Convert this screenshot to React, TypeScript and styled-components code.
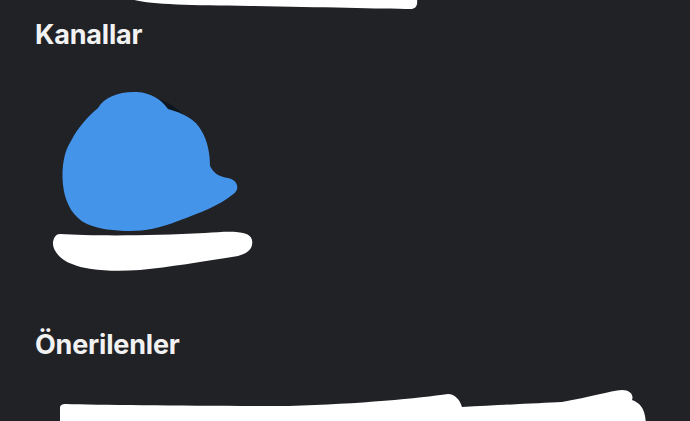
import { createGlobalStyle, styled } from 'styled-components';

const GlobalStyle = createGlobalStyle`
  html, body {
    margin: 0;
    padding: 0;
    background: #212226;
  }
  body {
    font-family: Inter, 'Noto Sans', sans-serif;
    color: #f4f4f5;
    overflow: hidden;
  }
`;

type Channel = {
  id: string;
};

const channels: Channel[] = [{ id: 'c1' }];

export default function App(): JSX.Element {
  return (
    <Page>
      <GlobalStyle />
      <TopBar>
        <TitleMark width={300} height={12} viewBox={'118 0 300 12'}>
          <path
            d={'M 122 -6 C 130 4 170 5 250 6 C 320 7 380 9 412 9 C 418 8 418 2 416 -6 Z'}
            fill={'#fff'}
          />
        </TitleMark>
      </TopBar>

      <Heading $top={21}>Kanallar</Heading>

      <ChannelRow>
        {channels.map((channel) => (
          <ChannelCard key={channel.id}>
            <Avatar />
            <AvatarCover width={200} height={150} viewBox={'50 88 200 150'}>
              <path
                d={
                  'M 98 108 C 104 97 120 91 137 92 C 151 93 161 99 168 109 C 183 113 196 120 201 130 C 208 141 210 155 210 166 C 214 174 220 177 228 178 C 238 180 241 190 232 195 C 222 204 200 213 178 221 C 160 228 145 231 130 231 C 114 231 99 229 87 224 C 74 218 65 204 63 185 C 61 165 65 150 71 141 C 77 129 87 117 98 108 Z'
                }
                fill={'#4494ea'}
              />
            </AvatarCover>
            <NameMark width={210} height={48} viewBox={'50 228 210 48'}>
              <path
                d={
                  'M 60 234 C 90 236 150 236 205 233 C 230 231 250 230 252 240 C 254 250 245 254 238 256 C 200 262 170 267 140 270 C 110 272 85 270 72 264 C 60 260 52 250 53 242 C 54 237 56 234 60 234 Z'
                }
                fill={'#fff'}
              />
            </NameMark>
          </ChannelCard>
        ))}
      </ChannelRow>

      <Heading $top={67}>Önerilenler</Heading>

      <SuggestionMark width={620} height={40} viewBox={'40 390 620 40'}>
        <path
          d={
            'M 60 430 L 60 410 C 60 407 62 406 66 406 C 100 407 200 408 289 408 C 360 406 420 400 448 396 C 455 396 460 402 462 409 C 500 407 540 405 562 404 C 590 399 610 393 622 392 C 630 392 634 397 632 402 C 640 405 646 410 646 430 Z'
          }
          fill={'#fff'}
        />
      </SuggestionMark>
    </Page>
  );
}

const Page = styled.div`
  width: 690px;
  height: 421px;
  display: flex;
  flex-direction: column;
  overflow: hidden;

  & > * {
    flex-shrink: 0;
  }
`;

const TopBar = styled.div`
  height: 12px;
  display: flex;
`;

const TitleMark = styled.svg`
  display: block;
  margin-left: 118px;
`;

const Heading = styled.h2<{ $top: number }>`
  margin: ${(p) => p.$top - 12}px 0 0 35px;
  font-size: 27px;
  line-height: 27px;
  font-weight: 700;
  letter-spacing: -0.2px;
  color: #f2f2f3;
`;

const ChannelRow = styled.div`
  display: flex;
  gap: 16px;
  margin-top: 40px;
  padding-left: 50px;
`;

const ChannelCard = styled.div`
  position: relative;
  width: 210px;
  display: flex;
  flex-direction: column;
  padding-top: 7px;
`;

const Avatar = styled.div`
  width: 130px;
  height: 130px;
  margin-left: 22px;
  border-radius: 50%;
  background: radial-gradient(circle at 50% 40%, #1a2a3c 0%, #0c0f15 70%);
`;

const AvatarCover = styled.svg`
  position: absolute;
  left: 0;
  top: 0;
`;

const NameMark = styled.svg`
  display: block;
  margin-top: 3px;
`;

const SuggestionMark = styled.svg`
  display: block;
  margin-top: 30px;
  margin-left: 40px;
`;
